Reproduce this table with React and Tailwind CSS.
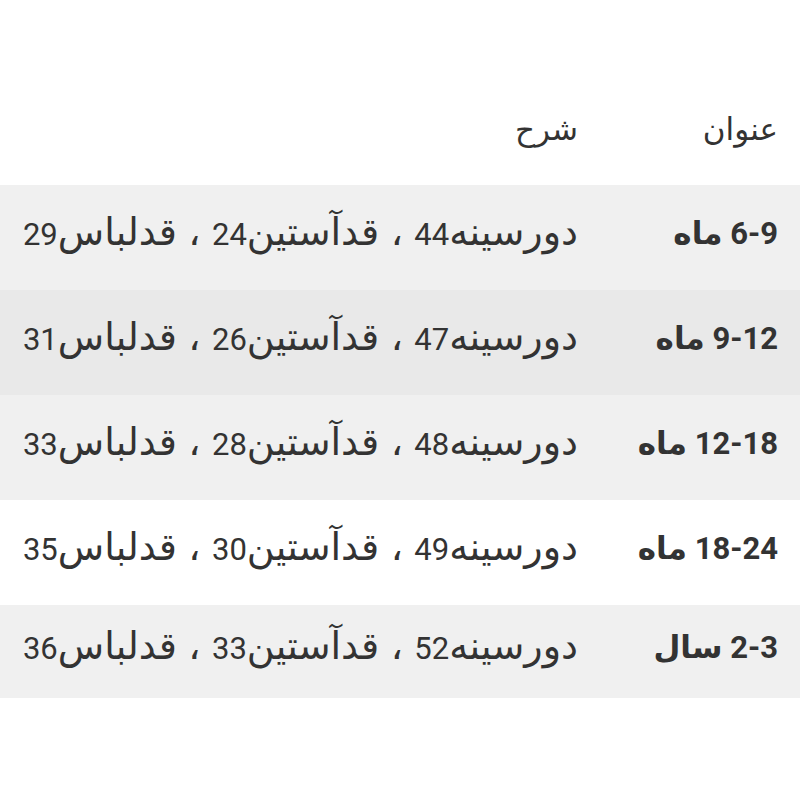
const rows = [
	{ title: "6-9 ماه", desc: "دورسینه44 ، قدآستین24 ، قدلباس29", bg: "bg-[#f0f0f0]" },
	{ title: "9-12 ماه", desc: "دورسینه47 ، قدآستین26 ، قدلباس31", bg: "bg-[#e9e9e9]" },
	{ title: "12-18 ماه", desc: "دورسینه48 ، قدآستین28 ، قدلباس33", bg: "bg-[#f0f0f0]" },
	{ title: "18-24 ماه", desc: "دورسینه49 ، قدآستین30 ، قدلباس35", bg: "bg-white" },
	{ title: "2-3 سال", desc: "دورسینه52 ، قدآستین33 ، قدلباس36", bg: "bg-[#f0f0f0]" },
];

// digits stay at 31px, the arabic words a bit larger so the line is as wide as the original
function Desc({ text }) {
	return text.split(/(\d+)/).map((part, i) =>
		/\d/.test(part) ? (
			<span key={i}>{part}</span>
		) : (
			<span key={i} className="text-[38px] [word-spacing:2px]">
				{part}
			</span>
		)
	);
}

export default function App() {
	return (
		<div
			dir="rtl"
			className="w-[800px] h-[800px] bg-white pt-[80px] text-[#333] text-[31px]"
			style={{ fontFamily: 'Roboto, "DejaVu Sans", sans-serif' }}>
			{/* header */}
			<div className="flex h-[105px] items-center pb-[4px]">
				<div className="w-[200px] pr-[22px] font-medium">عنوان</div>
				<div className="flex-1 pr-[22px] font-medium">شرح</div>
			</div>
			{rows.map((row, i) => (
				<div
					key={row.title}
					className={`flex items-center pb-[6px] ${row.bg} ${
						i === rows.length - 1 ? "h-[93px]" : "h-[105px]"
					}`}>
					<div className="w-[200px] pr-[22px] font-bold whitespace-nowrap">
						{row.title}
					</div>
					<div className="flex-1 pr-[22px] pb-[6px] whitespace-nowrap leading-none">
						<Desc text={row.desc} />
					</div>
				</div>
			))}
		</div>
	);
}
